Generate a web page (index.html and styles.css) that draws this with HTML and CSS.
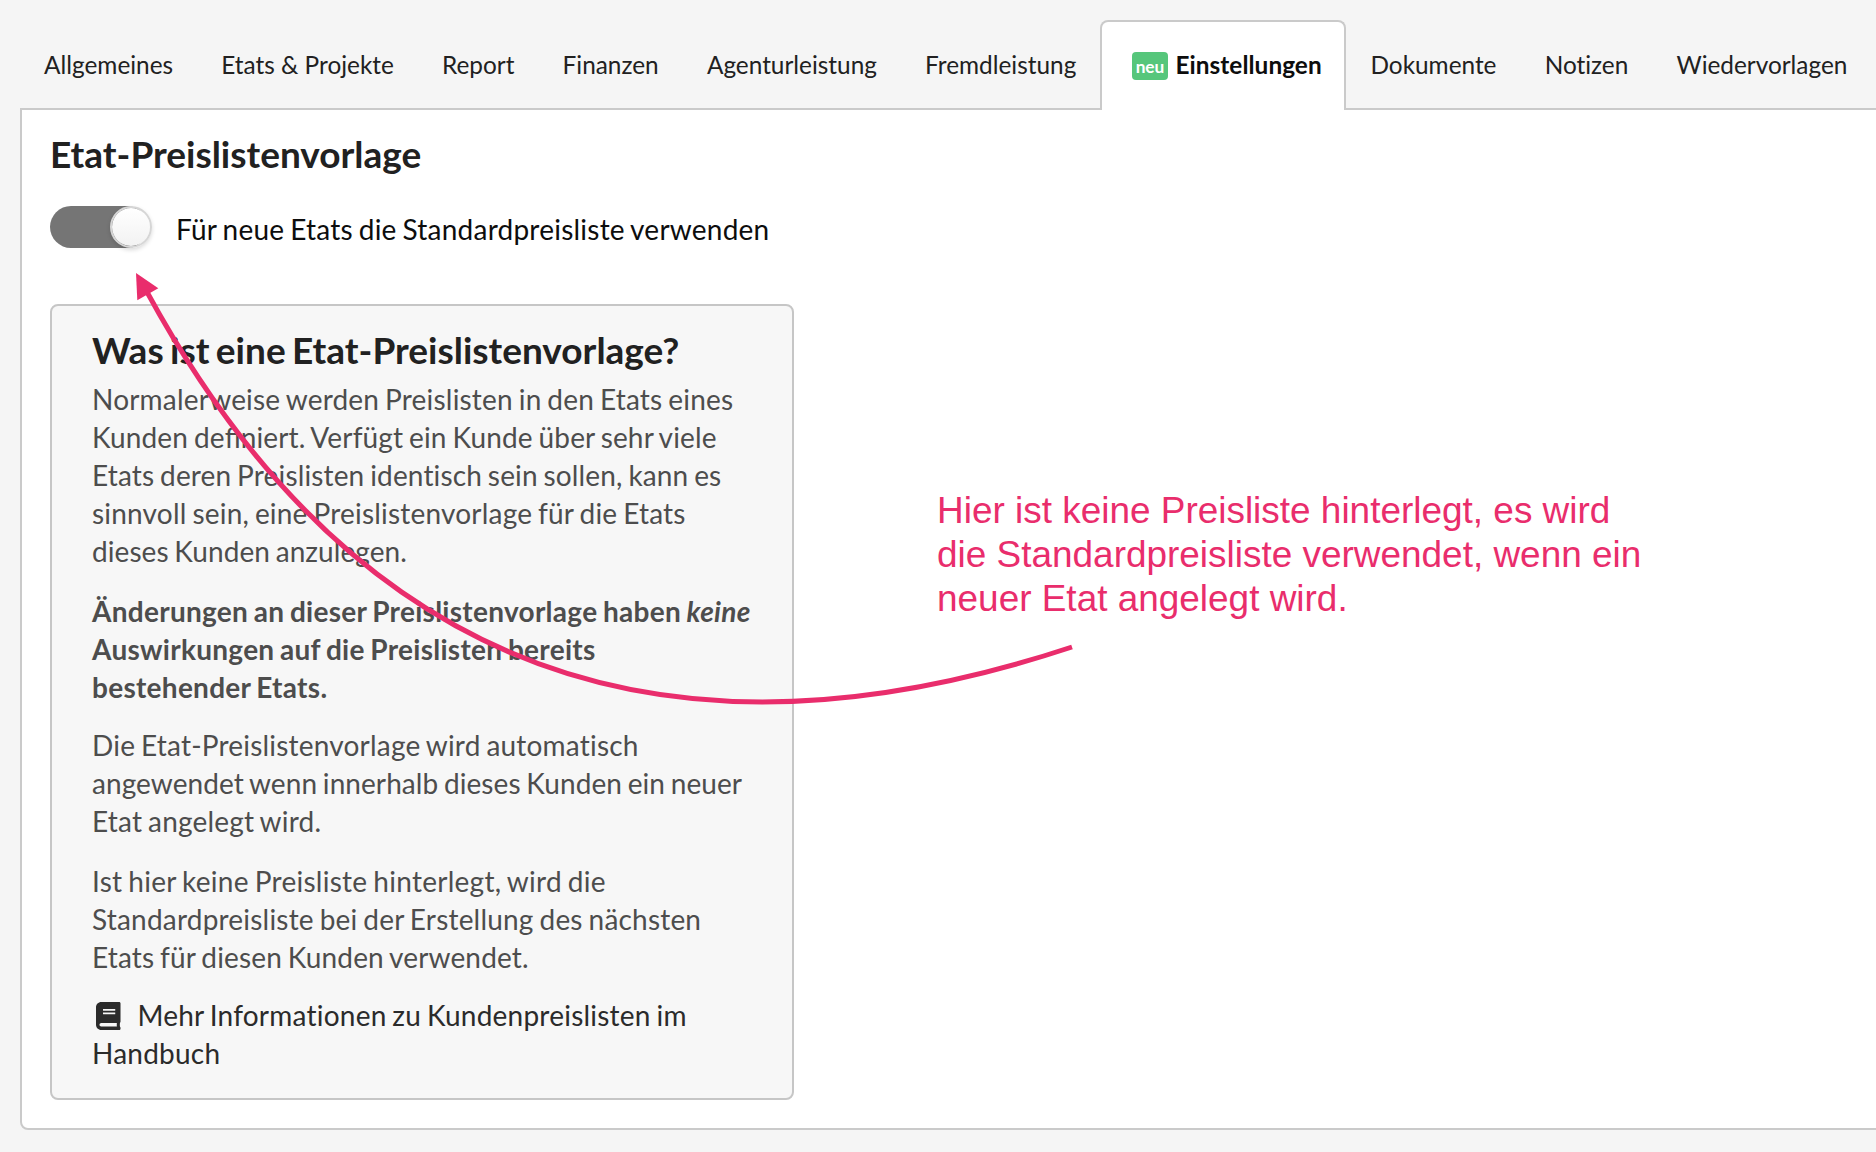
FILE: index.html
```html
<!DOCTYPE html>
<html lang="de">
<head>
<meta charset="utf-8">
<title>Einstellungen</title>
<link rel="stylesheet" href="styles.css">
</head>
<body>
<nav class="tabs">
  <a class="tab">Allgemeines</a>
  <a class="tab">Etats &amp; Projekte</a>
  <a class="tab">Report</a>
  <a class="tab">Finanzen</a>
  <a class="tab">Agenturleistung</a>
  <a class="tab">Fremdleistung</a>
  <a class="tab active"><span class="badge">neu</span><span class="tab-name">Einstellungen</span></a>
  <a class="tab">Dokumente</a>
  <a class="tab">Notizen</a>
  <a class="tab">Wiedervorlagen</a>
</nav>
<main class="panel">
  <h2 class="title">Etat-Preislistenvorlage</h2>
  <div class="setting">
    <span class="toggle"><span class="thumb"></span></span>
    <span class="label">Für neue Etats die Standardpreisliste verwenden</span>
  </div>
  <section class="info">
    <h3 class="info-title">Was ist eine Etat-Preislistenvorlage?</h3>
    <p>Normalerweise werden Preislisten in den Etats eines<br><span class="tight">Kunden de<span class="lig">fi</span>niert. Verfügt ein Kunde über sehr viele<br>Etats deren Preislisten identisch sein sollen, kann es</span><br>sinnvoll sein, eine Preislistenvorlage für die Etats<br><span class="tighter">dieses Kunden anzulegen.</span></p>
    <p class="strong">Änderungen an dieser Preislistenvorlage haben <em>keine</em><br>Auswirkungen auf die Preislisten bereits<br>bestehender Etats.</p>
    <p>Die Etat-Preislistenvorlage wird automatisch<br><span class="tighter">angewendet wenn innerhalb dieses Kunden ein neuer</span><br>Etat angelegt wird.</p>
    <p><span class="wide">Ist hier keine Preisliste hinterlegt, wird die</span><br>Standardpreisliste bei der Erstellung des nächsten<br><span class="tight">Etats für diesen Kunden verwendet.</span></p>
    <p class="more"><svg class="book" viewBox="0 0 448 512"><path d="M448 360V24c0-13.3-10.7-24-24-24H96C43 0 0 43 0 96v320c0 53 43 96 96 96h328c13.3 0 24-10.7 24-24v-16c0-7.5-3.5-14.3-8.9-18.7-4.2-15.4-4.2-59.3 0-74.7 5.4-4.3 8.9-11.1 8.9-18.6zM128 134c0-3.3 2.7-6 6-6h212c3.3 0 6 2.7 6 6v20c0 3.3-2.7 6-6 6H134c-3.3 0-6-2.7-6-6v-20zm0 64c0-3.3 2.7-6 6-6h212c3.3 0 6 2.7 6 6v20c0 3.3-2.7 6-6 6H134c-3.3 0-6-2.7-6-6v-20zm253.4 250H96c-17.7 0-32-14.3-32-32 0-17.6 14.4-32 32-32h285.4c-1.9 17.1-1.9 46.9 0 64z"/></svg>Mehr Informationen zu Kundenpreislisten im<br>Handbuch</p>
  </section>
</main>
<p class="note">Hier ist keine Preisliste hinterlegt, es wird<br>die Standardpreisliste verwendet, wenn ein<br>neuer Etat angelegt wird.</p>
<svg class="arrow" viewBox="0 0 1876 1152">
  <path class="shaft" d="M147 292Q452 852 1072 647"/>
  <path class="head" d="M136 273L158.3 288.3L137.3 300.3Z"/>
</svg>
</body>
</html>
```

FILE: styles.css
```css
* { box-sizing: border-box; }
body {
  margin: 0;
  height: 1152px;
  position: relative;
  overflow: hidden;
  background: #f5f5f5;
  font-family: Lato, "Liberation Sans", sans-serif;
  font-size: 28px;
  font-variant-ligatures: none;
  white-space: nowrap;
}
h2, h3, p { margin: 0; }

.tabs {
  display: flex;
  height: 108px;
  padding: 20px 0 0 20px;
  font-size: 24.36px;
  line-height: 30px;
  color: #212121;
}
.tab {
  display: flex;
  flex: none;
  align-items: center;
  height: 88px;
  padding: 2px 24.1px 0;
}
.tab.active {
  position: relative;
  z-index: 1;
  width: 246px;
  height: 90px;
  padding: 0 0 0 29.6px;
  border: 2px solid #cacaca;
  border-bottom: 0;
  border-radius: 8px 8px 0 0;
  background: #fff;
  color: #0d0d0d;
  font-weight: bold;
}
.tab-name {
  padding-bottom: 2px;
  letter-spacing: .04px;
}
.badge {
  width: 36px;
  height: 28px;
  margin-right: 7.6px;
  border-radius: 4px;
  background: #56c67b;
  color: #fff;
  font-size: 17.3px;
  line-height: 29px;
  text-align: center;
}

.panel {
  height: 1022px;
  margin: 0 -10px 0 20px;
  padding: 22px 28px 0;
  border: 2px solid #cacaca;
  border-radius: 0 0 8px 8px;
  background: #fff;
}
.title {
  font-size: 37px;
  line-height: 44px;
  color: #212121;
}
.setting {
  display: flex;
  gap: 28px;
  height: 42px;
  margin-top: 30px;
}
.toggle {
  display: flex;
  justify-content: flex-end;
  width: 98px;
  border-radius: 21px;
  background: #757575;
}
.thumb {
  flex: none;
  width: 42px;
  height: 42px;
  margin-right: -4px;
  border: 2px solid #d6d6d6;
  border-radius: 50%;
  background: linear-gradient(#fff, #f2f2f2);
  background-clip: padding-box;
  box-shadow: 0 2px 4px rgba(0, 0, 0, .15);
}
.label {
  padding-top: 6px;
  line-height: 34px;
  letter-spacing: .23px;
  word-spacing: -1.5px;
  color: #0d0d0d;
}

.info {
  width: 744px;
  height: 796px;
  margin-top: 56px;
  padding: 21px 40px 0;
  border: 2px solid #c6c6c6;
  border-radius: 8px;
  background: #f7f7f7;
  line-height: 38px;
  letter-spacing: .2px;
  word-spacing: -1.5px;
  color: #4d4d4d;
}
.info-title {
  margin-bottom: 7px;
  font-size: 37px;
  line-height: 46px;
  letter-spacing: 0;
  word-spacing: -2.6px;
  color: #212121;
}
.info p { margin-bottom: 22px; }
.info p.strong, .info p.strong + p + p { margin-bottom: 20px; }
.strong {
  font-weight: bold;
  letter-spacing: .28px;
}
.tight { letter-spacing: .15px; }
.tighter { letter-spacing: .07px; }
.wide { letter-spacing: .27px; }
.lig {
  font-variant-ligatures: normal;
  letter-spacing: 0;
}
.info .more {
  letter-spacing: .22px;
  color: #2b2b2b;
}
.book {
  width: 24.5px;
  height: 28px;
  margin: 0 16.5px 0 4.4px;
  vertical-align: -3.5px;
  fill: #2b2b2b;
}

.note {
  position: absolute;
  left: 937px;
  top: 489px;
  font: 36.95px/44px "Liberation Sans", Arial, sans-serif;
  color: #e92d6c;
}
.arrow {
  position: absolute;
  z-index: 2;
  left: 0;
  top: 0;
  width: 1876px;
  height: 1152px;
}
.shaft { fill: none; stroke: #e92d6c; stroke-width: 5; }
.head { fill: #e92d6c; }
```
